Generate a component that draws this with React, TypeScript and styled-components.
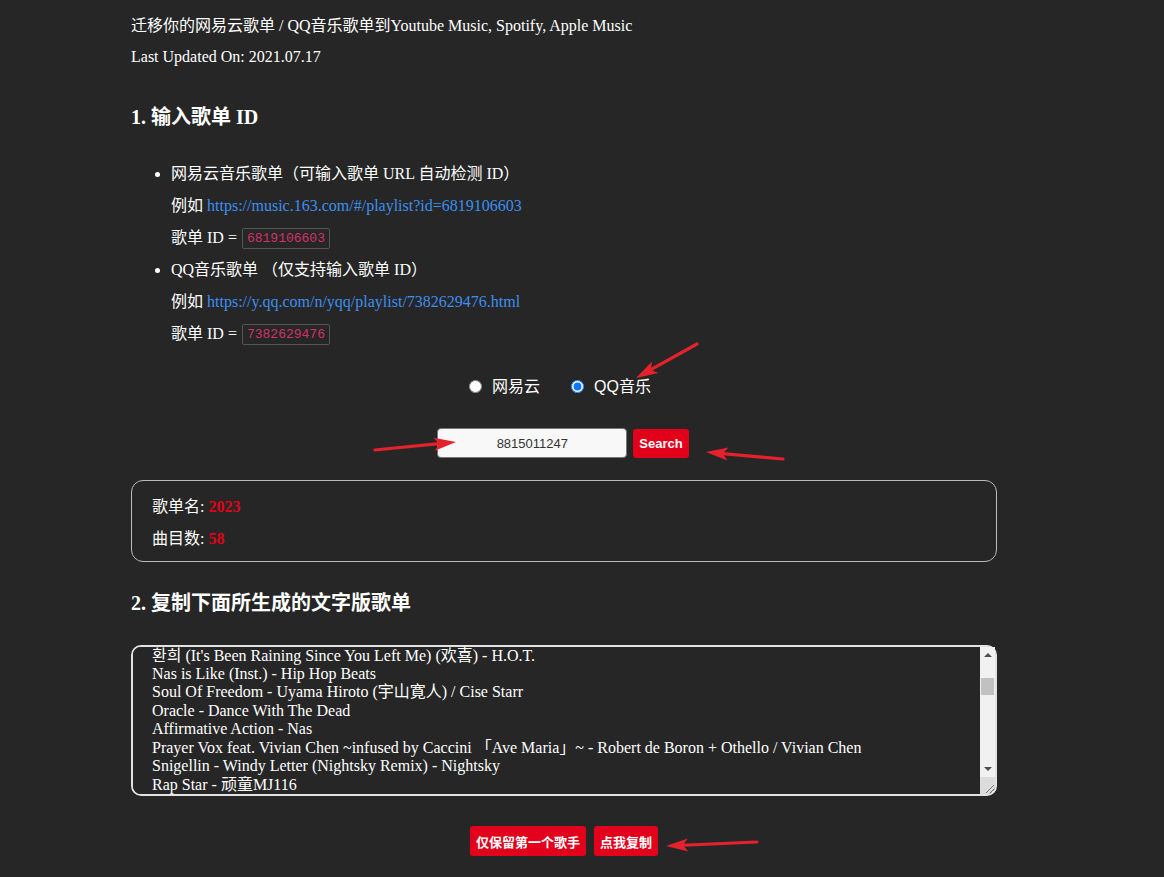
import React, { useEffect, useRef } from "react";
import styled, { createGlobalStyle } from "styled-components";

const GlobalStyle = createGlobalStyle`
  html, body {
    margin: 0;
    background: #262626;
  }
  body {
    font-family: "Liberation Serif", "Noto Sans CJK SC", serif;
  }
`;

const RED = "#e3001b";

const Page = styled.div`
  position: relative;
  min-height: 877px;
  background: #262626;
  overflow: hidden;
`;

const Main = styled.main`
  width: 866px;
  margin-left: 131px;
  padding-top: 10px;
  color: #fff;
  font-family: "Liberation Serif", "Noto Sans CJK SC", serif;
  font-size: 16px;
  line-height: 31px;
`;

const Intro = styled.p`
  margin: 0;
`;

const SectionTitle = styled.h3<{ $top: number }>`
  margin: ${(p) => p.$top}px 0 0;
  font-size: 20px;
  line-height: 24px;
  font-weight: bold;
`;

const SourceList = styled.ul`
  margin: 29px 0 0;
  padding-left: 40px;
  line-height: 32px;
`;

const SourceLine = styled.div`
  height: 32px;
  display: flex;
  align-items: center;
  white-space: pre;
`;

const Link = styled.a`
  color: #3d8ff0;
  text-decoration: none;
`;

const IdCode = styled.code`
  display: inline-block;
  box-sizing: border-box;
  height: 21px;
  margin-left: 1px;
  font-family: "Liberation Mono", "DejaVu Sans Mono", monospace;
  font-size: 13px;
  line-height: 19px;
  color: #d0336a;
  border: 1px solid #555;
  border-radius: 2px;
  padding: 0 4px;
`;

const RadioRow = styled.div`
  display: flex;
  justify-content: center;
  align-items: center;
  gap: 31px;
  height: 24px;
  margin-top: 24px;
  padding-right: 8px;
  font-family: "Liberation Sans", "Noto Sans CJK SC", sans-serif;
  font-size: 16px;
`;

const RadioOption = styled.label`
  display: flex;
  align-items: center;
  gap: 10px;
`;

const RadioInput = styled.input`
  margin: 0;
  width: 13px;
  height: 13px;
  accent-color: #0a75ff;
`;

const SearchRow = styled.div`
  display: flex;
  justify-content: center;
  align-items: center;
  gap: 6px;
  margin-top: 30px;
  padding-right: 2px;
`;

const SearchInput = styled.input`
  box-sizing: border-box;
  width: 190px;
  height: 30px;
  border: 1px solid #777;
  border-radius: 4px;
  background: #f8f8f8;
  color: #333;
  text-align: center;
  font-family: "Liberation Sans", Arial, sans-serif;
  font-size: 13px;
  outline: none;
`;

const RedButton = styled.button<{ $h: number }>`
  height: ${(p) => p.$h}px;
  padding: 0 6px;
  border: none;
  border-radius: 3px;
  background: ${RED};
  color: #fff;
  font-family: "Liberation Sans", "Noto Sans CJK SC", sans-serif;
  font-size: 13px;
  font-weight: bold;
  cursor: pointer;
`;

const ResultBox = styled.div`
  margin-top: 22px;
  border: 1px solid #bbb;
  border-radius: 12px;
  padding: 10px 20px 6px;
  line-height: 32px;
`;

const Value = styled.b`
  color: ${RED};
`;

const AreaWrap = styled.div`
  position: relative;
  margin-top: 30px;
`;

const SongArea = styled.textarea`
  display: block;
  box-sizing: border-box;
  width: 866px;
  height: 151px;
  padding: 0 34px 0 19px;
  border: 2px solid #e2e2e2;
  border-radius: 10px;
  background: #262626;
  color: #fff;
  font-family: "Liberation Serif", "Noto Sans CJK SC", serif;
  font-size: 16px;
  line-height: 18.4px;
  outline: none;
  scrollbar-width: none;
`;

const ScrollRail = styled.div`
  position: absolute;
  top: 2px;
  right: 2px;
  bottom: 2px;
  width: 15px;
  display: flex;
  flex-direction: column;
  background: #f1f1f1;
  border-bottom-right-radius: 8px;
  overflow: hidden;
  pointer-events: none;
`;

const RailButton = styled.div<{ $down?: boolean }>`
  height: 16px;
  display: flex;
  align-items: center;
  justify-content: center;

  &::before {
    content: "";
    width: 0;
    height: 0;
    border-left: 4px solid transparent;
    border-right: 4px solid transparent;
    ${(p) =>
      p.$down ? "border-top: 4px solid #505050;" : "border-bottom: 4px solid #505050;"}
  }
`;

const RailTrack = styled.div`
  flex: 1;
  padding: 15px 1px 0;
`;

const RailThumb = styled.div`
  height: 17px;
  background: #c1c1c1;
`;

const RailCorner = styled.div`
  height: 17px;
  background: #dcdcdc;
  display: flex;
  align-items: flex-end;
  justify-content: flex-end;
`;

const ButtonRow = styled.div`
  display: flex;
  justify-content: center;
  gap: 8px;
  margin-top: 30px;
  padding-bottom: 20px;
`;

const Overlay = styled.svg`
  position: absolute;
  top: 0;
  left: 0;
  width: 1164px;
  height: 877px;
  pointer-events: none;
`;

const visibleSongs = [
  "환희 (It's Been Raining Since You Left Me) (欢喜) - H.O.T.",
  "Nas is Like (Inst.) - Hip Hop Beats",
  "Soul Of Freedom - Uyama Hiroto (宇山寛人) / Cise Starr",
  "Oracle - Dance With The Dead",
  "Affirmative Action - Nas",
  "Prayer Vox feat. Vivian Chen ~infused by Caccini 「Ave Maria」~ - Robert de Boron + Othello / Vivian Chen",
  "Snigellin - Windy Letter (Nightsky Remix) - Nightsky",
  "Rap Star - 顽童MJ116",
];

const allSongs: string[] = [];
for (let i = 0; i < 58; i++) {
  allSongs.push(visibleSongs[(i - 9 + 80) % 8]);
}
const songText = allSongs.join("\n");

type Pt = [number, number];

function Arrow({ from, to }: { from: Pt; to: Pt }) {
  const dx = to[0] - from[0];
  const dy = to[1] - from[1];
  const len = Math.hypot(dx, dy);
  const ux = dx / len;
  const uy = dy / len;
  const nx = -uy;
  const ny = ux;
  const L = 22;
  const W = 6.5;
  const bx = to[0] - ux * L;
  const by = to[1] - uy * L;
  const notchX = bx + ux * 5;
  const notchY = by + uy * 5;
  const pts = [
    [to[0], to[1]],
    [bx + nx * W, by + ny * W],
    [notchX, notchY],
    [bx - nx * W, by - ny * W],
  ]
    .map((p) => p.join(","))
    .join(" ");
  return (
    <g>
      <line
        x1={from[0]}
        y1={from[1]}
        x2={notchX}
        y2={notchY}
        stroke="#e5222b"
        strokeWidth={3.2}
        strokeLinecap="round"
      />
      <polygon points={pts} fill="#e5222b" />
    </g>
  );
}

export default function App() {
  const areaRef = useRef<HTMLTextAreaElement>(null);

  useEffect(() => {
    if (areaRef.current) {
      areaRef.current.scrollTop = 9 * 18.4;
    }
  }, []);

  return (
    <Page>
      <GlobalStyle />
      <Main>
        <Intro>迁移你的网易云歌单 / QQ音乐歌单到Youtube Music, Spotify, Apple Music</Intro>
        <Intro>Last Updated On: 2021.07.17</Intro>

        <SectionTitle $top={33}>1. 输入歌单 ID</SectionTitle>
        <SourceList>
          <li>
            <SourceLine>网易云音乐歌单（可输入歌单 URL 自动检测 ID）</SourceLine>
            <SourceLine>
              例如 <Link href="#">https://music.163.com/#/playlist?id=6819106603</Link>
            </SourceLine>
            <SourceLine>
              歌单 ID = <IdCode>6819106603</IdCode>
            </SourceLine>
          </li>
          <li>
            <SourceLine>QQ音乐歌单 （仅支持输入歌单 ID）</SourceLine>
            <SourceLine>
              例如 <Link href="#">https://y.qq.com/n/yqq/playlist/7382629476.html</Link>
            </SourceLine>
            <SourceLine>
              歌单 ID = <IdCode>7382629476</IdCode>
            </SourceLine>
          </li>
        </SourceList>

        <RadioRow>
          <RadioOption>
            <RadioInput type="radio" name="source" value="163" />
            网易云
          </RadioOption>
          <RadioOption>
            <RadioInput type="radio" name="source" value="qq" defaultChecked />
            QQ音乐
          </RadioOption>
        </RadioRow>

        <SearchRow>
          <SearchInput defaultValue="8815011247" />
          <RedButton $h={29}>Search</RedButton>
        </SearchRow>

        <ResultBox>
          <div>
            歌单名: <Value>2023</Value>
          </div>
          <div>
            曲目数: <Value>58</Value>
          </div>
        </ResultBox>

        <SectionTitle $top={29}>2. 复制下面所生成的文字版歌单</SectionTitle>
        <AreaWrap>
          <SongArea ref={areaRef} defaultValue={songText} spellCheck={false} />
          <ScrollRail>
            <RailButton />
            <RailTrack>
              <RailThumb />
            </RailTrack>
            <RailButton $down />
            <RailCorner>
              <svg width="12" height="12" viewBox="0 0 12 12">
                <line x1="11" y1="3" x2="3" y2="11" stroke="#777" strokeWidth="1" />
                <line x1="11" y1="7" x2="7" y2="11" stroke="#777" strokeWidth="1" />
              </svg>
            </RailCorner>
          </ScrollRail>
        </AreaWrap>

        <ButtonRow>
          <RedButton $h={30}>仅保留第一个歌手</RedButton>
          <RedButton $h={30}>点我复制</RedButton>
        </ButtonRow>
      </Main>

      <Overlay viewBox="0 0 1164 877">
        <Arrow from={[697, 344]} to={[636, 378]} />
        <Arrow from={[375, 450]} to={[456, 442]} />
        <Arrow from={[783, 459]} to={[706, 452]} />
        <Arrow from={[757, 842]} to={[666, 846]} />
      </Overlay>
    </Page>
  );
}
